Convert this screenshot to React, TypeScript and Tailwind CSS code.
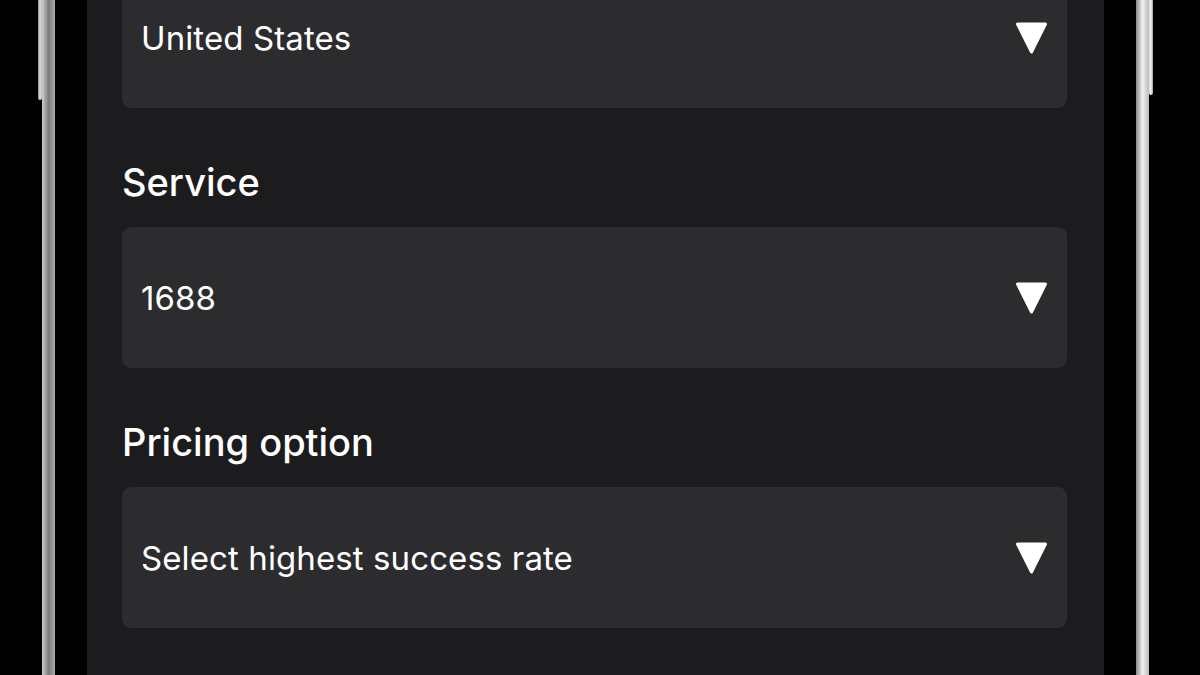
import React from "react";

function Caret() {
  return (
    <svg width="33" height="34" viewBox="0 0 33 34" aria-hidden="true">
      <path d="M2.5 3 L30.5 3 L16.5 31 Z" fill="#ffffff" stroke="#ffffff" strokeWidth="3" strokeLinejoin="round" />
    </svg>
  );
}

function SelectBox({ value }: { value: string }) {
  return (
    <div className="h-[141px] rounded-[9px] bg-[#2c2c2f] flex items-center justify-between pl-[19px] pr-[19px]">
      <span className="text-[33px] leading-[40px] text-white tracking-[0.1px]">{value}</span>
      <Caret />
    </div>
  );
}

function Label({ children }: { children: React.ReactNode }) {
  return (
    <div className="mt-[51px] mb-[22px] text-[38px] leading-[46px] text-white font-medium">{children}</div>
  );
}

export default function App() {
  return (
    <div
      className="w-[1200px] h-[675px] bg-black overflow-hidden flex"
      style={{ fontFamily: "Inter, 'Noto Sans', sans-serif" }}
    >
      <div className="w-[38px] shrink-0" />
      <div className="w-[4px] shrink-0 flex flex-col">
        <div className="h-[100px] bg-linear-to-r from-[#8d8d8d] via-[#e2e2e2] to-[#b5b5b5] rounded-b-[2px]" />
      </div>
      <div className="w-[13px] shrink-0 bg-linear-to-r from-[#cfcfcf] via-[#7c7c7c] to-[#a9a9a9]" />
      <div className="w-[32px] shrink-0 bg-black" />
      <div className="w-[1017px] shrink-0 bg-[#1c1c1e] pl-[35px] pr-[37px]">
        <div className="-mt-[33px]">
          <SelectBox value="United States" />
          <Label>Service</Label>
          <SelectBox value="1688" />
          <Label>Pricing option</Label>
          <SelectBox value="Select highest success rate" />
        </div>
      </div>
      <div className="w-[32px] shrink-0 bg-black" />
      <div className="w-[13px] shrink-0 bg-linear-to-r from-[#8a8a8a] via-[#f0f0f0] to-[#bdbdbd]" />
      <div className="w-[4px] shrink-0 flex flex-col">
        <div className="h-[95px] bg-linear-to-r from-[#d8d8d8] via-[#f2f2f2] to-[#9a9a9a] rounded-b-[2px]" />
      </div>
      <div className="flex-1" />
    </div>
  );
}
